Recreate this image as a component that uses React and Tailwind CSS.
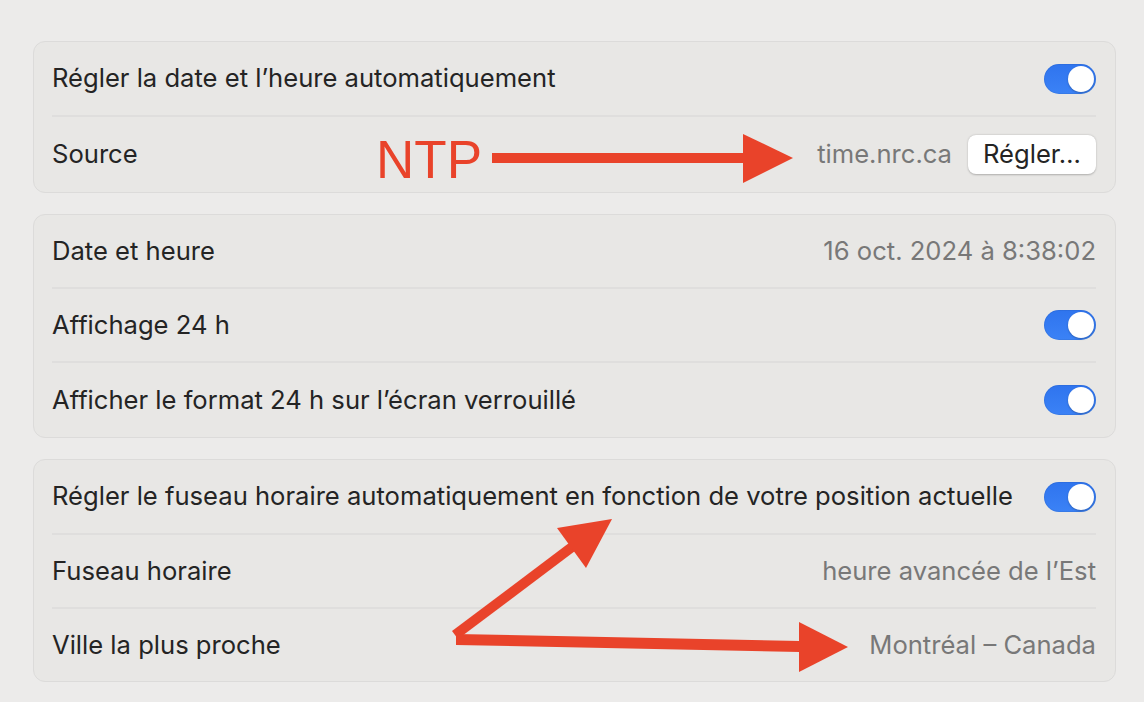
import React from 'react';

const Toggle = () => (
  <div className="flex h-[30px] w-[52px] items-center justify-end rounded-full bg-gradient-to-b from-[#2f74ee] to-[#3b82f6] p-[2px] shadow-[inset_0_0_0_1px_rgba(0,0,0,0.06)]">
    <div className="h-[26px] w-[26px] rounded-full bg-white shadow-[0_1px_2px_rgba(0,0,0,0.25)]" />
  </div>
);

const Row = ({ label, children, last, h = 'h-[74px]' }) => (
  <div className={`flex ${h} items-center justify-between ${last ? '' : 'border-b-2 border-[#dfdedd]'}`}>
    <span className="text-[#242424]">{label}</span>
    <div className="flex items-center gap-4 text-[#787878]">{children}</div>
  </div>
);

const Panel = ({ children }) => (
  <div className="rounded-[12px] border border-[#dcdbda] bg-[#e8e7e5] pl-[18px] pr-[19px]">{children}</div>
);

const Annotations = () => (
  <svg className="pointer-events-none absolute left-0 top-0" width="1144" height="702" viewBox="0 0 1144 702">
    <g fill="#e9432a" stroke="none">
      {/* NTP arrow */}
      <rect x="492" y="153" width="254" height="10" />
      <polygon points="743,134 793,158 743,183" />
      {/* up-right arrow */}
      <polygon points="452,631 569,543 575,551 458,639" />
      <polygon points="612,519 557,528 586,568" />
      {/* right arrow */}
      <polygon points="456,634 800,641 800,652 456,645" />
      <polygon points="799,622 848,647 799,672" />
    </g>
  </svg>
);

export default function App() {
  return (
    <div
      className="relative h-[702px] w-[1144px] overflow-hidden bg-[#ecebea] text-[25.6px]"
      style={{ fontFamily: 'Inter, "Noto Sans", "Liberation Sans", sans-serif' }}
    >
      <div className="flex flex-col gap-[21px] pl-[33px] pr-[28px] pt-[41px]">
        <Panel>
          <Row label="Régler la date et l’heure automatiquement" h="h-[75px]">
            <Toggle />
          </Row>
          <Row label="Source" last h="h-[75px]">
            <span>time.nrc.ca</span>
            <button className="flex h-[39px] w-[128px] items-center justify-center rounded-[8px] bg-white text-[#242424] shadow-[0_0.5px_2px_rgba(0,0,0,0.25)]">
              Régler…
            </button>
          </Row>
        </Panel>

        <Panel>
          <Row label="Date et heure">
            <span>16 oct. 2024 à 8:38:02</span>
          </Row>
          <Row label="Affichage 24 h">
            <Toggle />
          </Row>
          <Row label="Afficher le format 24 h sur l’écran verrouillé" last>
            <Toggle />
          </Row>
        </Panel>

        <Panel>
          <Row label="Régler le fuseau horaire automatiquement en fonction de votre position actuelle" h="h-[75px]">
            <Toggle />
          </Row>
          <Row label="Fuseau horaire" h="h-[74px]">
            <span>heure avancée de l’Est</span>
          </Row>
          <Row label="Ville la plus proche" last h="h-[72px]">
            <span>Montréal – Canada</span>
          </Row>
        </Panel>
      </div>

      <span
        className="absolute left-[376px] top-[133px] text-[53px] leading-none text-[#e9432a]"
        style={{ fontFamily: '"Liberation Sans", Arial, sans-serif' }}
      >
        NTP
      </span>

      <Annotations />
    </div>
  );
}
